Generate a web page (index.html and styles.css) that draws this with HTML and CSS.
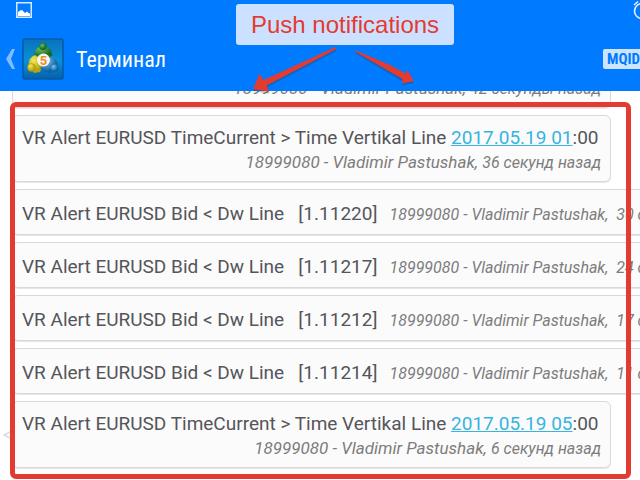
FILE: index.html
```html
<!DOCTYPE html>
<html lang="ru">
<head>
    <meta charset="UTF-8">
    <meta name="viewport" content="width=device-width, initial-scale=1.0">
    <title>Терминал</title>
    <link rel="stylesheet" href="styles.css">
</head>
<body>
    <header class="header">
        <div class="status">
            <svg class="picture" width="16" height="16" viewBox="0 0 16 16">
                <rect x="0.75" y="0.75" width="14.5" height="14.5" fill="none" stroke="#d6e8ff" stroke-width="1.5"/>
                <path d="M2 14V10L3 9.500L4 8.500L6 8L7.500 9.500L9 11L11 9.500L12.500 11L14 11.500V14Z" fill="#fff"/>
            </svg>
            <svg class="alarm" width="18" height="20" viewBox="0 0 18 20">
                <circle cx="9" cy="11" r="7.500" fill="none" stroke="#e6f1ff" stroke-width="1.600"/>
                <path d="M1 5L5 1.500M13 1.500L17 5M9 7V11L12 13" fill="none" stroke="#e6f1ff" stroke-width="1.600"/>
            </svg>
        </div>
        <div class="bar">
            <button class="back" aria-label="Назад">
                <svg width="10" height="20" viewBox="0 0 10 20">
                    <path d="M6 0H9L5 10L9 20H6L0 10Z" fill="#80bcff"/>
                </svg>
            </button>
            <svg class="logo" width="42" height="42" viewBox="0 0 42 42">
                <defs>
                    <linearGradient id="tile" x1="0" y1="0" x2="0" y2="1">
                        <stop offset="0" stop-color="#0872bd"/>
                        <stop offset="0.550" stop-color="#0892d6"/>
                        <stop offset="1" stop-color="#0560ab"/>
                    </linearGradient>
                    <radialGradient id="green" cx="0.350" cy="0.300" r="0.600">
                        <stop offset="0" stop-color="#6fbf5a"/>
                        <stop offset="1" stop-color="#156b2a"/>
                    </radialGradient>
                    <radialGradient id="yellow" cx="0.350" cy="0.300" r="0.600">
                        <stop offset="0" stop-color="#f7ea55"/>
                        <stop offset="1" stop-color="#b3a312"/>
                    </radialGradient>
                    <radialGradient id="blue" cx="0.350" cy="0.300" r="0.600">
                        <stop offset="0" stop-color="#7cc4ee"/>
                        <stop offset="1" stop-color="#0f62a6"/>
                    </radialGradient>
                </defs>
                <rect x="1" y="1" width="40" height="40" rx="2" fill="url(#tile)" stroke="#0759a8" stroke-width="1.500"/>
                <path d="M21 7Q29 9 30.500 17L28 20H14L12 17Q13 9 21 7Z" fill="url(#green)"/>
                <circle cx="21" cy="8.500" r="3.500" fill="url(#green)" stroke="#156b2a" stroke-width="0.500"/>
                <path d="M6.500 27Q7 19 13 17L18 20L21 27L18 34L12 35Z" fill="url(#yellow)"/>
                <circle cx="9.500" cy="29.500" r="4" fill="url(#yellow)" stroke="#a09010" stroke-width="0.500"/>
                <path d="M29 18Q36 21 36 29L32 34Q24 37 18 30L24 26Z" fill="url(#blue)"/>
                <circle cx="32.500" cy="30" r="4" fill="url(#blue)" stroke="#0f62a6" stroke-width="0.500"/>
                <circle cx="21.500" cy="22" r="6.500" fill="#f6f6f6"/>
                <text class="logo-digit" x="21.500" y="26.500" text-anchor="middle">5</text>
            </svg>
            <h1 class="title">Терминал</h1>
            <button class="mqid">MQID</button>
        </div>
    </header>

    <main class="messages">
        <article class="message">
            <div class="text">VR Alert EURUSD TimeCurrent &gt; Time Vertikal Line <a href="#">2017.05.19 02</a>:00</div>
            <div class="meta">18999080 - Vladimir Pastushak, <span class="ago">42 секунды назад</span></div>
        </article>
        <article class="message">
            <div class="text">VR Alert EURUSD TimeCurrent &gt; Time Vertikal Line <a href="#">2017.05.19 01</a>:00</div>
            <div class="meta">18999080 - Vladimir Pastushak, <span class="ago">36 секунд назад</span></div>
        </article>
        <article class="message short">
            <div class="text">VR Alert EURUSD Bid &lt; Dw Line &nbsp; [1.11220]</div>
            <div class="meta">18999080 - Vladimir Pastushak, <span class="ago">30 секунд назад</span></div>
        </article>
        <article class="message short">
            <div class="text">VR Alert EURUSD Bid &lt; Dw Line &nbsp; [1.11217]</div>
            <div class="meta">18999080 - Vladimir Pastushak, <span class="ago">24 секунды назад</span></div>
        </article>
        <article class="message short">
            <div class="text">VR Alert EURUSD Bid &lt; Dw Line &nbsp; [1.11212]</div>
            <div class="meta">18999080 - Vladimir Pastushak, <span class="ago">17 секунд назад</span></div>
        </article>
        <article class="message short">
            <div class="text">VR Alert EURUSD Bid &lt; Dw Line &nbsp; [1.11214]</div>
            <div class="meta">18999080 - Vladimir Pastushak, <span class="ago">11 секунд назад</span></div>
        </article>
        <article class="message last">
            <svg class="tail" width="10" height="10" viewBox="0 0 10 10">
                <path d="M10 0.500L1 5L10 9.500" fill="#fbfbfb" stroke="#d9d9d9" stroke-width="1.500"/>
            </svg>
            <div class="text">VR Alert EURUSD TimeCurrent &gt; Time Vertikal Line <a href="#">2017.05.19 05</a>:00</div>
            <div class="meta">18999080 - Vladimir Pastushak, <span class="ago">6 секунд назад</span></div>
        </article>
    </main>

    <!-- callout over the screen -->
    <div class="frame"></div>
    <div class="callout">Push notifications</div>
    <svg class="arrows" width="170" height="50" viewBox="0 0 170 50">
        <g class="shadow" transform="translate(0 1.500)">
            <path d="M89 0.500Q91 1 89.500 3L21.500 38.500L23.500 45L7 42.500L14.500 28L17.500 33Z"/>
            <path d="M109 4.500Q109 3 111 4L160.500 27L162 23.500L167.500 34.500L156 37L157.500 33.500Z"/>
        </g>
        <path d="M88.500 0.500Q91 0.500 89.500 2.500L20.500 38.500L23 44.500L7 42L13.500 27L17.500 33Z" fill="#e43b31"/>
        <path d="M109 4.500Q109.500 3.500 111 4L144 18L159.500 26.500L161.500 23.500L168 34L156 36.500L156.500 32Z" fill="#e43b31"/>
    </svg>
</body>
</html>
```

FILE: styles.css
```css
* {
    box-sizing: border-box;
}

body {
    display: flex;
    flex-direction: column;
    position: relative;
    margin: 0;
    height: 100vh;
    overflow: hidden;
    background-color: #fff;
    font-family: Roboto, "Noto Sans", sans-serif;
}

button {
    padding: 0;
    border: none;
    background: none;
    font-family: inherit;
}

svg {
    display: block;
    flex: none;
}

.header {
    flex: none;
    height: 91px;
    overflow: hidden;
    background-color: #007aff;
}

.status {
    display: flex;
    justify-content: space-between;
    height: 28px;
    padding: 2px 0 0 16px;
}

.alarm {
    margin: -2px -11px 0 0;
}

.bar {
    display: flex;
    align-items: center;
    height: 62px;
    padding-left: 6px;
}

.back {
    flex: none;
    margin-right: 6px;
}

.logo-digit {
    fill: #f28a1e;
    font-family: Roboto, sans-serif;
    font-size: 13px;
    font-weight: bold;
}

.title {
    flex: 1;
    margin: 0 0 0 12px;
    color: #fff;
    font-family: "Roboto Condensed", Roboto, sans-serif;
    font-size: 22px;
    font-weight: normal;
}

.mqid {
    flex: none;
    height: 20px;
    margin-right: -4px;
    padding: 0 4px;
    border-radius: 2px;
    background-color: #cce4ff;
    color: #007aff;
    font-family: "Roboto Condensed", Roboto, sans-serif;
    font-size: 15px;
    font-weight: bold;
    line-height: 20px;
}

/* newest message stays at the bottom */
.messages {
    display: flex;
    flex: 1;
    flex-direction: column;
    justify-content: flex-end;
    gap: 7px;
    min-height: 0;
    padding: 0 29px 12px 12px;
    overflow: hidden;
}

.message {
    flex: none;
    height: 67px;
    padding: 10px 9px 0;
    border: 1px solid #d9d9d9;
    border-radius: 6px;
    background-color: #fbfbfb;
    box-shadow: 0 1px 0 #e6e6e6;
    white-space: nowrap;
}

.text {
    color: #55555a;
    font-size: 19px;
    line-height: 24px;
}

.text a {
    color: #36b4e2;
}

.meta {
    color: #7d7d7d;
    font-size: 17px;
    font-style: italic;
    line-height: 24px;
    text-align: right;
}

.ago {
    font-size: 16px;
}

.short {
    display: flex;
    align-items: center;
    gap: 12px;
    align-self: flex-start;
    height: 46px;
    padding-top: 3px;
}

.short .meta {
    padding-top: 3px;
    font-size: 16px;
}

.short .ago {
    margin-left: 4px;
}

.last {
    position: relative;
}

.tail {
    position: absolute;
    left: -10px;
    top: 28px;
}

.frame {
    position: absolute;
    top: 102px;
    right: 9px;
    bottom: 1px;
    left: 10px;
    border: 5px solid #e43b31;
    border-radius: 6px;
}

.callout {
    position: absolute;
    top: 4px;
    left: 236px;
    padding: 0 15px;
    border-radius: 3px;
    background-color: #cce1ff;
    color: #e43b31;
    font-family: "Liberation Sans", Arial, sans-serif;
    font-size: 24px;
    line-height: 41px;
}

.arrows {
    position: absolute;
    top: 47px;
    left: 246px;
}

.shadow {
    fill: #333;
    opacity: 0.3;
}
```
